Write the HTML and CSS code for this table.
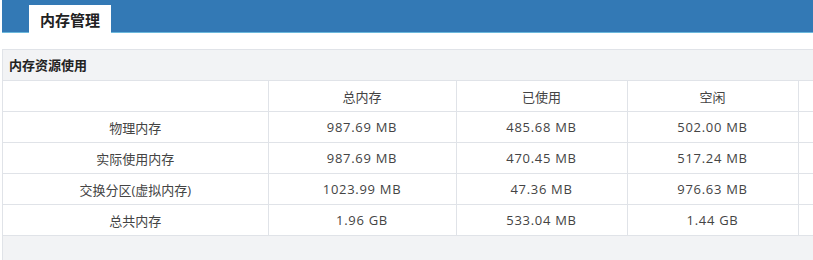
FILE: index.html
```html
<!DOCTYPE html>
<html lang="zh-CN">
<head>
<meta charset="utf-8">
<link rel="stylesheet" href="styles.css">
</head>
<body>
<div class="page">
  <div class="topbar">
    <div class="tab">内存管理</div>
  </div>
  <div class="panel">
    <div class="panel-title">内存资源使用</div>
    <table class="mem">
      <colgroup>
        <col class="c1"><col class="c2"><col class="c3"><col class="c4"><col class="c5">
      </colgroup>
      <tr><td></td><td>总内存</td><td>已使用</td><td>空闲</td><td></td></tr>
      <tr><td>物理内存</td><td class="num">987.69 MB</td><td class="num">485.68 MB</td><td class="num">502.00 MB</td><td></td></tr>
      <tr><td>实际使用内存</td><td class="num">987.69 MB</td><td class="num">470.45 MB</td><td class="num">517.24 MB</td><td></td></tr>
      <tr><td>交换分区(虚拟内存)</td><td class="num">1023.99 MB</td><td class="num">47.36 MB</td><td class="num">976.63 MB</td><td></td></tr>
      <tr><td>总共内存</td><td class="num">1.96 GB</td><td class="num">533.04 MB</td><td class="num">1.44 GB</td><td></td></tr>
    </table>
  </div>
</div>
</body>
</html>
```
FILE: styles.css
```css
html, body {
  margin: 0;
  padding: 0;
  background: #fff;
  overflow: hidden;
}
.page {
  padding-left: 2px;
  width: 900px;
  font-family: "Open Sans", "Noto Sans CJK SC", sans-serif;
  font-size: 13px;
  color: #444;
}
.topbar {
  height: 32px;
  background: #3379b5;
  border-bottom: 1px solid #6bb8dc;
  display: flex;
  align-items: flex-end;
  padding-left: 27px;
}
.tab {
  background: #fff;
  height: 28px;
  width: 82px;
  display: flex;
  align-items: center;
  justify-content: center;
  font-family: "Noto Sans CJK SC", sans-serif;
  font-weight: bold;
  font-size: 15px;
  color: #222;
  margin-bottom: -1px;
}
.panel {
  margin-top: 16px;
  background: #f2f3f5;
  border-top: 1px solid #e0e3e8;
  border-left: 1px solid #e0e3e8;
  height: 260px;
}
.panel-title {
  height: 30px;
  line-height: 30px;
  padding-left: 6px;
  font-family: "Noto Sans CJK SC", sans-serif;
  font-weight: bold;
  font-size: 13px;
  color: #222;
  border-bottom: 1px solid #e0e3e8;
}
.mem {
  border-collapse: collapse;
  background: #fff;
  table-layout: fixed;
  width: 880px;
}
.mem col.c1 { width: 265px; }
.mem col.c2 { width: 188px; }
.mem col.c3 { width: 171px; }
.mem col.c4 { width: 171px; }
.mem col.c5 { width: 85px; }
.mem td {
  height: 30px;
  padding: 0;
  text-align: center;
  border-right: 1px solid #e0e3e8;
  border-bottom: 1px solid #e0e3e8;
  color: #444;
}
.mem td.num {
  letter-spacing: 0.7px;
}
```
